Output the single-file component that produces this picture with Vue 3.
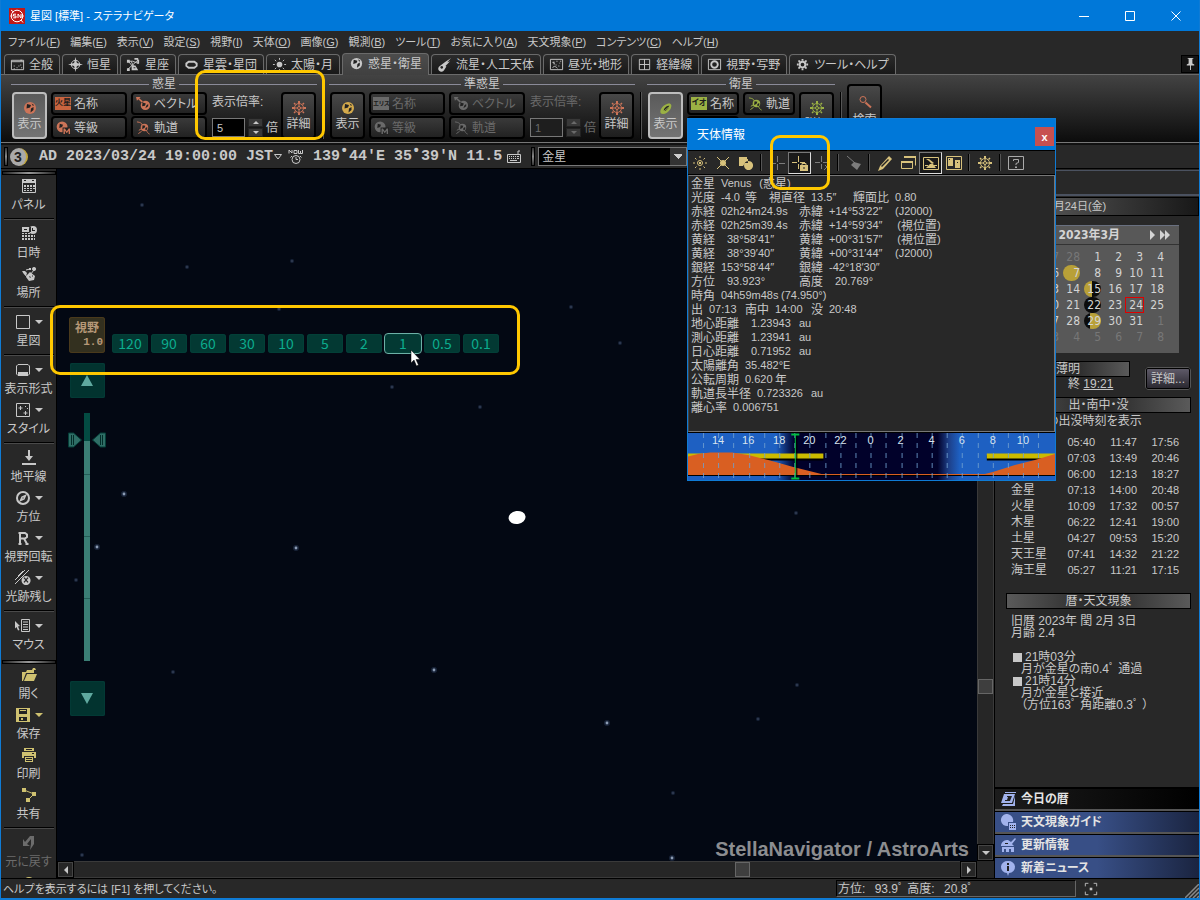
<script setup>
import { h, ref } from 'vue'

/* Each shape is "f:" (filled), "s:" (stroked) or "k:" (dark fill) followed by path data on a 16 x 16 grid. */
const shapes = {
  logo: ['f:M0 0H16V16H0z', 'w:M8 2.2a5.8 5.8 0 1 0 0 11.6a5.8 5.8 0 1 0 0-11.6M2 2l2.5 2M12 12l2 2.5M1.5 8h2M12.5 8h2', 'w:M7 6.2H4.5V8H7V9.8H4.2M9 10V6l3 4V6'],
  window: ['s:M1.5 3.5h13v10h-13zM1.5 5h13', 'f:M4 9h1v1H4zM7 11h1v1H7zM11 8h1v1h-1zM9 9h1v1H9zM4 12h1v1H4zM12 11h1v1h-1zM11 3h2v1h-2z'],
  target: ['s:M8 3.5a4.5 4.5 0 1 0 0 9a4.5 4.5 0 1 0 0-9', 'f:M8 0l1.5 6.500L16 8l-6.500 1.500L8 16l-1.500-6.500L0 8l6.500-1.500z'],
  constellation: ['s:M2.500 4.500l7 8.500M2.500 4.500H7L13.500 7M9.500 13l-4-8.500M2 13L13 3', 'f:M1 3h3v3H1zM9 1h4v2H9zM12 3h2v4h-2zM1 12h3v3H1zM6 9h4l3 5H6z', 'k:M8 11h2v1H8z'],
  nebula: ['t:M5 5h6l2.500 2v2.500L11 11.500H5L2.500 9.500V7z'],
  sun: ['f:M8 5a3 3 0 1 0 0 6a3 3 0 1 0 0-6', 's:M8 1v2M8 13v2M1 8h2M13 8h2M3 3l1.500 1.500M11.500 11.500L13 13M13 3l-1.500 1.500M4.500 11.500L3 13'],
  sunx: ['f:M8 5a3 3 0 1 0 0 6a3 3 0 1 0 0-6', 's:M2 2l4 4M14 2l-4 4M2 14l4-4M14 14l-4-4'],
  sunhollow: ['s:M8 5.500a2.500 2.500 0 1 0 0 5a2.500 2.500 0 1 0 0-5M8 1v2M8 13v2M1 8h2M13 8h2M3 3l1.500 1.500M11.500 11.500L13 13M13 3l-1.500 1.500M4.500 11.500L3 13', 'f:M7 7h2v2H7z'],
  planet: ['f:M8 2a6 6 0 1 0 0 12a6 6 0 1 0 0-12', 'k:M5 4l4 1-1 2.500-3.500 1zM9 8.500l2.500-1.500v3l-3 2.500zM9.500 3.500l2.500 1.500-1 1z'],
  planetarrow: ['f:M10 5a5 5 0 1 0 0 10a5 5 0 1 0 0-10M0 1h5L3.500 2.500 8 6 6.500 7.500 2.500 3.500 1 5z', 'k:M7 7l3.500 1-1 2.500-3 .5zM11 10l2-1.500v2.500l-3 2z'],
  planetm: ['f:M6.500 1.500a5.800 5.800 0 1 0 0 11.600a5.800 5.800 0 1 0 0-11.600', 'k:M4 4l3.500 1-1 2.500-3 1zM7 8h9v8H7z', 'f:M8 15V9h1.500l2 3 2-3H15v6h-1.500v-3.500l-2 2.500-2-2.500V15z'],
  orbit: ['f:M9 4a4 4 0 1 0 0 8a4 4 0 1 0 0-8', 'k:M7 5.500l3 .5-1 2.500-2.500 1zM10 8.500l2-1v2.500l-2 1z', 's:M1 2c4 .5 5 1.500 6 3.500M11 11c1 2 2 3.500 3.500 4M3 11l2.500-1.500M2.500 14.500L6 12'],
  moonring: ['f:M9 4c4-1.500 5.500 1 3.500 5-2.500 4-7 6-9.500 4.500C1 11 4 5.500 9 4', 'k:M6 11c-1-2 3-6 5.500-5l-1 2-3 3z', 's:M5 12l7-6'],
  gear: ['s:M8 3.500a4.500 4.500 0 1 0 0 9a4.500 4.500 0 1 0 0-9M8 6.500a1.500 1.500 0 1 0 0 3a1.500 1.500 0 1 0 0-3M8 4v2.500M8 9.500V12M4 8h2.500M9.500 8H12', 'f:M7 1h2v2.500H7zM7 12.500h2V15H7zM1 7h2.500v2H1zM12.500 7H15v2h-2.500zM2.500 3.500l1-1L5 4 4 5zM12.500 2.500l1 1L12 5l-1-1zM2.500 12.500L4 11l1 1-1.500 1.500zM11 12l1-1 1.500 1.500-1 1z'],
  cog: ['t:M8 5a3 3 0 1 0 0 6a3 3 0 1 0 0-6', 'f:M7 2h2v2H7zM7 12h2v2H7zM2 7h2v2H2zM12 7h2v2h-2zM3.500 3.500h2v2h-2zM10.500 3.500h2v2h-2zM3.500 10.500h2v2h-2zM10.500 10.500h2v2h-2z'],
  meteor: ['f:M15 1L9 5 3 9.500a3.300 3.300 0 1 0 4.500 4.500L10 10l-1-.5 5-5-3 1z', 'k:M5 9.500a1.500 1.500 0 1 0 .1 0z'],
  daylight: ['s:M1.500 2.500h13v11h-13zM4 11.500C5 9 7 10 9 12M4 5.500l2 2', 'f:M4 5h2v1H4zM8 4h1v1H8zM11 6h1v1h-1zM7 8h1v1H7zM12 4h1v1h-1zM10 9h1v1h-1zM5 7h1v1H5z'],
  grid: ['s:M2.500 2.500h11v11h-11zM8 2.500v11M2.500 8h11'],
  field: ['s:M1.500 2.500h13v11h-13z', 't:M8 4.500a3.500 3.500 0 1 0 0 7a3.500 3.500 0 1 0 0-7'],
  search: ['s:M6 2.500a3 3 0 1 0 0 6a3 3 0 1 0 0-6', 't:M8.500 8.500l5.500 5'],
  pin: ['f:M5 2h6v1h-1v5l2 1v1H4V9l2-1V3H5zM7.500 10h1v5h-1z'],
  clock: ['s:M8 6.500a4 4 0 1 0 0 8a4 4 0 1 0 0-8M8 8v2.500h2M4 7L2.500 8.500M12 7l1.500 1.500M1 4.500V1l3 3V1M6 1.500h3v3H6zM10.500 1v3.500h2V2M12.500 4.500h2V1'],
  keyboard: ['s:M1.500 5.500h13v8h-13zM12 5V2h2', 'f:M3 7h1v1H3zM5 7h1v1H5zM7 7h1v1H7zM9 7h1v1H9zM11 7h2v1h-2zM3 9h1v1H3zM5 9h1v1H5zM7 9h1v1H7zM9 9h1v1H9zM11 9h2v1h-2zM4 11h7v1H4z'],
  calendar: ['s:M1.500 2.500h13v12h-13z', 'f:M1 1h14v4H1zM3 7h2v2H3zM6 7h2v2H6zM9 7h2v2H9zM12 7h2v2h-2zM3 10h2v1H3zM6 10h2v1H6zM9 10h2v1H9zM12 10h2v1h-2zM3 12h2v1H3zM6 12h2v1H6zM9 12h2v1H9z', 'k:M3 2h2v1H3zM11 2h2v1h-2z'],
  datetime: ['f:M1 1h9v5H1zM1 7h2v1H1zM4 7h2v1H4zM7 7h2v1H7zM1 9h2v2H1zM4 9h2v2H4zM7 9h2v2H7zM10 9h2v2h-2zM13 9h1v2h-1zM1 12h2v2H1zM4 12h2v2H4zM7 12h2v2H7zM10 12h2v2h-2zM13 12h1v2h-1zM12 0a4 4 0 1 0 0 8a4 4 0 1 0 0-8', 'k:M11 2h1v2h2v1h-3zM3 3h3v1H3zM8 1h.7v5H8z'],
  place: ['f:M1 5h3l2 2-1 3-2-2zM6 9l3-3 5 4-1 4-5 1-3-4zM13 1a2 2 0 1 0 .1 0M8 2h2v2H8z', 's:M13 4l-4 5M2 6l5 6M5 4l4-1', 'k:M8 10l2 1-1 1zM11 9l1 1-1 1z'],
  square: ['s:M1.500 1.500h13v13h-13z'],
  display: ['s:M3 2.500h10l1.500 1.500v8L13 13.500H3L1.500 12V4z', 'f:M3 10h10v3H3z'],
  style: ['s:M1.500 1.500h13v13h-13zM5.500 4v4M3.500 6h4M10.500 9v4M8.500 11h4', 'f:M10 4h1v1h-1zM12 6h1v1h-1z'],
  horizon: ['f:M7 0h2v6h3l-4 5-4-5h3zM1 13h14v2H1z'],
  compass: ['t:M8 2a6 6 0 1 0 0 12a6 6 0 1 0 0-12', 'f:M12 4L9.500 9.500 4 12l2.500-5.500z', 'k:M7.500 7.500h1v1h-1z'],
  letterr: ['t:M5 14V3h5l2 1.500V7L10 8.500H5M9 8.500L12 14M3.500 3H6M3.500 14h3M10.500 14h3'],
  trail: ['s:M0 10L10 0M0 14L14 0M3 6l5-5', 'f:M11 6a4.500 4.500 0 1 0 .1 0', 'k:M8.500 8l1-.8L11 9l1.500-1.800 1 .8-1.800 2 1.800 2-1 .8L11 11l-1.500 1.800-1-.8 1.800-2z'],
  mouse: ['f:M0 3l5 5-2 .5 1.500 3.500-1.500.5L1.500 9 0 10.500z', 's:M6.500 1.500h8v12h-8zM8 4h5M8 6.500h5M8 9h5M8 11.500h5'],
  open: ['f:M1 5h4l1-2h5l1-2h2l1 2h-2v3H5L2 14H1zM6 7h10l-3 7H3z'],
  save: ['f:M1 1h14v14H1z', 'k:M4 2h8v5H4zM4 10h8v4H4z', 'f:M6 11h2v2H6zM5 3h6v1H5z'],
  print: ['f:M3 1h10v3H3zM1 5h14v6h-2V9H3v2H1zM4 10h8v5H4z', 'k:M5 2h6v1H5zM5 11h6v1H5zM5 13h6v1H5zM11 6h2v1h-2z'],
  share: ['s:M3 3l10 4-6 6', 'f:M1 1h4v4H1zM11 5h4v4h-4zM5 11h4v4H5z'],
  undo: ['f:M2 4l2 3 5-6h4v8l-4 6 1-6V4L6 9l3 2H2z'],
  shapes: ['f:M1 2h8v2h1v4H7L5 11H1zM10.500 6a4.500 4.500 0 1 0 .1 0'],
  cross: ['s:M8.500 1v6M8.500 9v6M1 8.500h6M10 8.500h6'],
  crosslock: ['s:M6.500 1v6M6.500 9v5M0 7.500h5M8 7.500h5', 'f:M8 10h8v6H8z', 's:M10 10V8.500h4V10', 'k:M11.500 12h1v2h-1z'],
  crossoff: ['s:M6.500 1v6M6.500 9v5M0 7.500h5M8 7.500h5M9 15l6-6M10 10l5 5'],
  broom: ['s:M1 1l8 7', 'f:M8 7l7 2-4 6-6-5z'],
  pencil: ['f:M12 1l3 3-9 10-5 2 2-5z', 'k:M11 4l1 1-7 7-1-1z'],
  windows: ['s:M4.500 2.500h11v8M1.500 7.500h11v6h-11z', 'f:M4 1h12v2H4zM1 6h12v2H1z'],
  altitude: ['s:M.5 2.500h15v12H.5z', 'f:M3 13l4-4h3l3 4zM2 10h3v1H2zM11 10h3v1h-3zM3 4h3l5 4-2 1-3-3z'],
  book: ['s:M.5 1.500h15v13H.5z', 'f:M2 3h5v8H2zM9 5h5v8H9z', 'k:M3 4h1v1H3zM11 7h1v1h-1z'],
  help: ['s:M.500 1.500h15v13H.5z', 's:M5.500 6V4.500h5v3L8 8.500V10', 'f:M7 11.500h2v1.500H7z'],
  today: ['f:M5 1h11v1H5zM4 3h11l-3 9H1zM3 13h10l2-8v10H2z', 'k:M7 5h5l-2 5H5V9h2l1-3H7z'],
  guide: ['f:M6 0a6 6 0 1 0 2 12V8h5A6.500 6.500 0 0 0 6 0zM9 9h7v7H9z', 'k:M10 11h1v1h-1zM12 11h1v1h-1zM14 11h1v1h-1zM10 13h1v1h-1zM12 13h1v1h-1zM14 13h1v1h-1z'],
  update: ['f:M1 8c1-4 4-5 7-5l3 2 4-4 1 1-4 5 2 2H1zM2 10h12v5h-3v-3H9v3H6v-3H4v3H2z', 'k:M5 6h3v1H5z'],
  news: ['f:M8 1a6.500 6 0 0 0-1 12l1 3 1-3A6.500 6 0 0 0 8 1', 'k:M7 3h2v2H7zM7 6h2v5H7z'],
  focus: ['s:M1.500 5V1.500H5M11 1.500h3.500V5M14.500 11v3.500H11M5 14.500H1.500V11', 'f:M6.500 6.500h3v3h-3z'],
}
const Icon = (props) =>
  h('svg', { viewBox: '0 0 16 16', class: 'icon', 'aria-hidden': 'true' },
    shapes[props.name].map((s) => {
      const d = s.slice(2)
      const kind = s[0]
      if (kind === 'f') return h('path', { d, fill: 'currentColor' })
      if (kind === 'k') return h('path', { d, fill: '#222' })
      return h('path', { d, fill: 'none', stroke: kind === 'w' ? '#fff' : 'currentColor', 'stroke-width': kind === 't' ? 2 : 1 })
    }))
Icon.props = ['name']

const menus = [
  ['ファイル', 'F'], ['編集', 'E'], ['表示', 'V'], ['設定', 'S'], ['視野', 'I'], ['天体', 'O'], ['画像', 'G'],
  ['観測', 'B'], ['ツール', 'T'], ['お気に入り', 'A'], ['天文現象', 'P'], ['コンテンツ', 'C'], ['ヘルプ', 'H'],
]
const tabs = [
  ['window', '全般'], ['target', '恒星'], ['constellation', '星座'], ['nebula', '星雲・星団'], ['sun', '太陽・月'],
  ['planet', '惑星・衛星'], ['meteor', '流星・人工天体'], ['daylight', '昼光・地形'], ['grid', '経緯線'],
  ['field', '視野・写野'], ['cog', 'ツール・ヘルプ'],
]
const groups = [
  { title: '惑星', key: 'p', badge: '火星', tone: 'red', on: true, off: false, scale: '5' },
  { title: '準惑星', key: 'd', badge: 'エリス', tone: 'gold', on: false, off: true, scale: '1' },
]
const side = [
  ['calendar', 'パネル'], null, ['datetime', '日時'], ['place', '場所'], null, ['square', '星図', 1], null,
  ['display', '表示形式', 1], ['style', 'スタイル', 1], null, ['horizon', '地平線'], ['compass', '方位', 1],
  ['letterr', '視野回転', 1], ['trail', '光跡残し', 1], null, ['mouse', 'マウス', 1],
]
const fileTools = [
  ['open', '開く'], ['save', '保存', 1], ['print', '印刷'], ['share', '共有'], null,
]
const fovs = ['120', '90', '60', '30', '10', '5', '2', '1', '0.5', '0.1']
const fov = ref('1')
const stars = [
  [235, 92, 1], [85, 36, 1], [130, 98, 1], [514, 138, 1], [563, 174, 1], [222, 140, 1], [335, 218, 1], [423, 238, 1],
  [67, 325, 2], [40, 378, 2], [19, 411, 1], [239, 379, 2], [116, 503, 1], [377, 501, 2], [550, 554, 2], [701, 550, 1],
  [740, 516, 1], [739, 344, 1], [616, 624, 1], [615, 689, 2], [25, 686, 1],
]

const info = [
  '金星 Venus (惑星)',
  '光度 -4.0等  視直径 13.5″  輝面比 0.80',
  '赤経 02h24m24.9s  赤緯 +14°53′22″ (J2000)',
  '赤経 02h25m39.4s  赤緯 +14°59′34″ (視位置)',
  '黄経  38°58′41″   黄緯 +00°31′57″ (視位置)',
  '黄経  38°39′40″   黄緯 +00°31′44″ (J2000)',
  '銀経 153°58′44″   銀緯 -42°18′30″',
  '方位  93.923°     高度  20.769°',
  '時角 04h59m48s (74.950°)',
  '出 07:13 南中 14:00 没 20:48',
  '地心距離  1.23943 au',
  '測心距離  1.23941 au',
  '日心距離  0.71952 au',
  '太陽離角 35.482°E',
  '公転周期 0.620年',
  '軌道長半径 0.723326 au',
  '離心率 0.006751',
]
/* The readout is set on a grid of 6px cells: one for a Latin character, two for a Japanese one. */
const cells = (line) =>
  (line.match(/ +|[\u3000-\u9fff]+|[^ \u3000-\u9fff]+/g) || []).map((t) => {
    const wide = /[\u3000-\u9fff]/.test(t)
    return { t, wide, open: t === '(', w: t.length * (wide ? 12 : 6) }
  })

const hours = [14, 16, 18, 20, 22, 0, 2, 4, 6, 8, 10].map((n, i) => ({ n, x: 30 + Math.round(i * 30.4) }))
const ticks = Array.from({ length: 23 }, (_, i) => Math.round(15 + i * 15.2))

const weeks = [
  [['26', 'dim'], ['27', 'dim'], ['28', 'dim'], ['1'], ['2'], ['3'], ['4']],
  [['5'], ['6'], ['7', 'full'], ['8'], ['9'], ['10'], ['11']],
  [['12'], ['13'], ['14'], ['15', 'last'], ['16'], ['17'], ['18']],
  [['19'], ['20'], ['21'], ['22', 'new'], ['23'], ['24', 'today'], ['25']],
  [['26'], ['27'], ['28'], ['29', 'first'], ['30'], ['31'], ['1', 'dim']],
  [['2', 'dim'], ['3', 'dim'], ['4', 'dim'], ['5', 'dim'], ['6', 'dim'], ['7', 'dim'], ['8', 'dim']],
]
const rises = [
  ['太陽', '05:40', '11:47', '17:56'], ['月', '07:03', '13:49', '20:46'], ['水星', '06:00', '12:13', '18:27'],
  ['金星', '07:13', '14:00', '20:48'], ['火星', '10:09', '17:32', '00:57'], ['木星', '06:22', '12:41', '19:00'],
  ['土星', '04:27', '09:53', '15:20'], ['天王星', '07:41', '14:32', '21:22'], ['海王星', '05:27', '11:21', '17:15'],
]
const panels = [['today', '今日の暦'], ['guide', '天文現象ガイド'], ['update', '更新情報'], ['news', '新着ニュース']]
</script>

<template>
  <div class="win">
    <header class="title">
      <Icon name="logo" class="logo" />
      <h1>星図 [標準] - ステラナビゲータ</h1>
      <div class="winbtns">
        <button aria-label="最小化"><svg viewBox="0 0 10 10"><path d="M0 5.500h10" /></svg></button>
        <button aria-label="最大化"><svg viewBox="0 0 10 10"><path d="M.5.500h9v9h-9z" /></svg></button>
        <button aria-label="閉じる"><svg viewBox="0 0 10 10"><path d="M.5.500l9 9M9.500.500l-9 9" /></svg></button>
      </div>
    </header>

    <nav class="menu">
      <button v-for="m in menus" :key="m[1]">{{ m[0] }}(<u>{{ m[1] }}</u>)</button>
    </nav>

    <div class="tabs">
      <button v-for="(t, i) in tabs" :key="t[1]" :class="{ on: i === 5 }"><Icon :name="t[0]" />{{ t[1] }}</button>
      <button class="pin" aria-label="固定"><Icon name="pin" /></button>
    </div>

    <section class="ribbon">
      <template v-for="g in groups" :key="g.key">
        <div class="group" :class="[g.tone, { off: g.off }]">
          <h2>{{ g.title }}</h2>
          <div class="tools">
            <button class="big" :class="{ pressed: g.on }"><Icon name="planet" />表示</button>
            <div class="pair">
              <button class="small"><span class="badge" :class="{ tiny: g.badge.length > 2 }">{{ g.badge }}</span>名称</button>
              <button class="small"><Icon name="planetm" />等級</button>
            </div>
            <div class="pair">
              <button class="small"><Icon name="planetarrow" />ベクトル</button>
              <button class="small"><Icon name="orbit" />軌道</button>
            </div>
            <div class="scale">
              <label :for="'scale-' + g.key">表示倍率:</label>
              <div class="spin">
                <input :id="'scale-' + g.key" type="text" :value="g.scale" />
                <span class="arrows"><button aria-label="上げる"><i class="up"></i></button><button aria-label="下げる"><i class="down"></i></button></span>
                <span>倍</span>
              </div>
            </div>
            <button class="big detail"><Icon name="gear" />詳細</button>
          </div>
        </div>
        <span class="rule"></span>
      </template>
      <div class="group green">
        <h2>衛星</h2>
        <div class="tools">
          <button class="big pressed"><Icon name="moonring" />表示</button>
          <div class="pair short">
            <button class="small"><span class="badge">イオ</span>名称</button>
            <button class="small" aria-label="等級"></button>
          </div>
          <div class="pair short">
            <button class="small"><Icon name="orbit" />軌道</button>
          </div>
          <button class="big last"><Icon name="gear" />詳細</button>
        </div>
      </div>
      <span class="rule"></span>
      <button class="big find red"><Icon name="search" />検索</button>
    </section>

    <section class="status">
      <span class="grip"></span>
      <span class="coin">3</span>
      <span>AD</span><span>2023/03/24</span><span>19:00:00</span>
      <span class="zone">JST<svg viewBox="0 0 8 6"><path d="M.5.500h7L4 5z" /></svg></span>
      <Icon name="clock" class="now" />
      <span>139<sup>•</sup>44'E</span><span>35<sup>•</sup>39'N</span><span class="alt">11.5<Icon name="keyboard" /></span>
      <span class="grip second"></span>
      <select aria-label="天体"><option>金星</option><option>火星</option></select>
    </section>

    <main>
      <aside class="side">
        <span class="hgrip"></span>
        <template v-for="(s, i) in side" :key="i">
          <hr v-if="!s" />
          <button v-else><span class="glyph"><Icon :name="s[0]" /><i v-if="s[2]" class="down"></i></span>{{ s[1] }}</button>
        </template>
        <span class="hgrip low"></span>
        <template v-for="(s, i) in fileTools" :key="i">
          <hr v-if="!s" />
          <button v-else><span class="glyph file"><Icon :name="s[0]" /><i v-if="s[2]" class="down"></i></span>{{ s[1] }}</button>
        </template>
        <button class="dim"><span class="glyph"><Icon name="undo" /></span>元に戻す</button>
        <button aria-label="設定"><span class="glyph file"><Icon name="planet" /></span></button>
      </aside>

      <div class="view">
        <div class="sky">
          <svg class="stars">
            <g v-for="(s, i) in stars" :key="i">
              <circle :cx="s[0]" :cy="s[1]" :r="s[2] + 1" fill="#4a648f" opacity=".3" />
              <circle :cx="s[0]" :cy="s[1]" :r="s[2] * 0.7" fill="#a9b9d2" :opacity="s[2] * 0.4" />
            </g>
            <ellipse cx="460" cy="348.500" rx="8.500" ry="6.500" fill="#fff" transform="rotate(-8 460 348)" />
          </svg>
          <div class="fov">
            <button class="fovnow">視野<b>1.0</b></button>
            <button v-for="f in fovs" :key="f" :class="{ on: fov === f }" @click="fov = f">{{ f }}</button>
          </div>
          <div class="zoom">
            <button aria-label="拡大"><i class="up"></i></button>
            <svg class="slider" viewBox="0 0 40 252">
              <rect x="17" y="2" width="6" height="248" fill="#034b42" />
              <rect x="17" y="30" width="6" height="220" fill="#3b7e75" />
              <path d="M17 63.500h6M17 125.500h6M17 187.500h6" stroke="#245d57" />
              <path d="M1.500 22v14h5l8-7-8-7zM38.500 22v14h-5l-8-7 8-7z" fill="#2f6e66" stroke="#043f38" />
              <path d="M4.500 24v10M6.500 24v10M33.500 24v10M35.500 24v10" stroke="#032c28" />
            </svg>
            <button aria-label="縮小"><i class="down"></i></button>
          </div>
          <svg class="cursor" viewBox="0 0 11 18"><path d="M1 1v13l3-3 2.500 6 2-1L6 10.500h4z" fill="#fff" stroke="#000" stroke-width=".5" /></svg>
          <p class="mark">StellaNavigator / AstroArts</p>
        </div>
        <div class="vbar"><span class="thumb"></span><button aria-label="下へ"><i class="down"></i></button></div>
        <div class="hbar"><button aria-label="左へ"><i class="left"></i></button><span class="thumb"></span><button aria-label="右へ"><i class="right"></i></button></div>
      </div>

      <aside class="panel">
        <div class="band"></div>
        <h2 class="date">2023年 3月24日(金)</h2>
        <div class="cal">
          <div class="calhead"><span>2023年3月</span><button aria-label="翌月"><i class="right"></i></button><button aria-label="翌年"><i class="right"></i><i class="right"></i></button></div>
          <table>
            <tbody>
              <tr v-for="(w, i) in weeks" :key="i"><td v-for="(d, j) in w" :key="j" :class="d[1]"><span>{{ d[0] }}</span></td></tr>
            </tbody>
          </table>
        </div>
        <div class="dusk">
          <div>
            <h3>薄明</h3>
            <p>終 <a href="#">19:21</a></p>
          </div>
          <button>詳細...</button>
        </div>
        <h3>出・南中・没</h3>
        <p class="note">金星の出没時刻を表示</p>
        <table class="rise">
          <tbody>
            <tr v-for="r in rises" :key="r[0]"><th>{{ r[0] }}</th><td>{{ r[1] }}</td><td>{{ r[2] }}</td><td>{{ r[3] }}</td></tr>
          </tbody>
        </table>
        <h3 class="almanac">暦・天文現象</h3>
        <div class="events">
          <p>旧暦 2023年 閏 2月 3日</p>
          <p>月齢 2.4</p>
          <p class="event"><span class="mark-sq"></span>21時03分</p>
          <p class="in">月が金星の南0.4ﾟ 通過</p>
          <p><span class="mark-sq"></span>21時14分</p>
          <p class="in">月が金星と接近</p>
          <p class="in">（方位163ﾟ 角距離0.3ﾟ ）</p>
        </div>
        <nav class="links">
          <button v-for="(p, i) in panels" :key="p[1]" :class="{ on: i === 0 }"><Icon :name="p[0]" />{{ p[1] }}</button>
        </nav>
      </aside>
    </main>

    <footer>
      <span class="hint">ヘルプを表示するには [F1] を押してください。</span>
      <span class="pos">方位:&ensp; 93.9ﾟ 高度:&ensp; 20.8ﾟ</span>
      <Icon name="focus" class="focus" />
      <svg class="size" viewBox="0 0 14 14"><path d="M0 14L14 0M4 14L14 4M8 14l6-6M12 14l2-2" stroke="#888" stroke-width="1.500" /></svg>
    </footer>

    <section class="popup">
      <header><h2>天体情報</h2><button aria-label="閉じる">x</button></header>
      <div class="bar">
        <button aria-label="明るく"><Icon name="sunhollow" /></button>
        <button aria-label="消去"><Icon name="sunx" /></button>
        <button aria-label="複写"><Icon name="shapes" /></button>
        <span class="rule"></span>
        <button class="off" aria-label="中心"><Icon name="cross" /></button>
        <button class="on" aria-label="中心を固定"><Icon name="crosslock" /></button>
        <button class="off" aria-label="固定解除"><Icon name="crossoff" /></button>
        <span class="rule"></span>
        <button class="off wide" aria-label="導入"><Icon name="broom" /></button>
        <span class="rule"></span>
        <button aria-label="編集"><Icon name="pencil" /></button>
        <button aria-label="ウィンドウ"><Icon name="windows" /></button>
        <button class="on" aria-label="高度グラフ"><Icon name="altitude" /></button>
        <button aria-label="図鑑"><Icon name="book" /></button>
        <span class="rule"></span>
        <button aria-label="設定"><Icon name="gear" /></button>
        <span class="rule"></span>
        <button class="grey" aria-label="ヘルプ"><Icon name="help" /></button>
      </div>
      <div class="readout">
        <p v-for="(l, i) in info" :key="i"><span v-for="(c, j) in cells(l)" :key="j" :class="{ latin: !c.wide, open: c.open }" :style="{ width: c.w + 'px' }">{{ c.t }}</span></p>
      </div>
      <svg class="graph" viewBox="0 0 366 47" preserveAspectRatio="none">
        <defs>
          <linearGradient id="night">
            <stop offset="0" stop-color="#1e60c2" /><stop offset=".24" stop-color="#1e60c2" /><stop offset=".29" stop-color="#01012a" />
            <stop offset=".68" stop-color="#01012a" /><stop offset=".71" stop-color="#1d3f88" /><stop offset=".74" stop-color="#1e60c2" /><stop offset="1" stop-color="#1e60c2" />
          </linearGradient>
        </defs>
        <rect width="366" height="47" fill="url(#night)" />
        <path d="M0 24h135M298 24h68" stroke="#000" stroke-width="5" transform="translate(0 1)" />
        <path d="M0 23h135M298 23h68" stroke="#cbbb00" stroke-width="5" />
        <path d="M0 42V23.500L10 21l12-1.500h22L60 22l20 5 25 7 28 7h163l8-2 22-7 20-5 20-6V42z" fill="#d95f22" />
        <path d="M0 42.500h366" stroke="#000" /><path d="M0 41.500h366" stroke="#d95f22" />
        <path v-for="t in ticks" :key="t" :d="`M${t}.5 0V47`" stroke="#6f9fd0" stroke-dasharray="5 5" opacity=".85" />
        <text v-for="o in hours" :key="o.n" :x="o.x" y="11">{{ o.n }}</text>
        <path d="M107 1v45" stroke="#00c040" /><path d="M108.500 1v45" stroke="#000" /><path d="M103 1.500h8M103 45.500h8" stroke="#00c040" stroke-width="2" />
      </svg>
      <div class="ring lock"></div>
    </section>
    <div class="ring scalering"></div>
    <div class="ring fovring"></div>
  </div>
</template>

<style>
html, body { margin: 0; background: #282828; }
</style>

<style scoped>
* { box-sizing: border-box; margin: 0; }
.win {
  position: relative; display: flex; flex-direction: column; height: 100vh; overflow: hidden;
  border: 1px solid #0f7bd5; border-top: 0; background: #282828; color: #c8c8c8;
  font-family: "Liberation Sans", "Noto Sans CJK JP", sans-serif; font-size: 12px; line-height: 16px;
  font-feature-settings: "palt";
}
button, input, select { font: inherit; font-feature-settings: inherit; color: inherit; background: none; border: 0; padding: 0; white-space: nowrap; }
h1, h2, h3 { font-size: 12px; font-weight: 400; }
.icon { width: 16px; height: 16px; flex: none; }
i { display: block; width: 0; height: 0; border: 4px solid transparent; }
i.up { border-top: 0; border-bottom-color: currentColor; }
i.down { border-bottom: 0; border-top-color: currentColor; }
i.left { border-left: 0; border-right-color: currentColor; }
i.right { border-right: 0; border-left-color: currentColor; }

.title { display: flex; align-items: center; flex: none; height: 31px; padding-left: 8px; background: #0078d9; color: #fff; }
.title h1 { font-size: 11px; }
.logo { color: #c01818; margin-right: 5px; }
.winbtns { display: flex; margin-left: auto; }
.winbtns button { display: flex; align-items: center; justify-content: center; width: 46px; height: 31px; }
.winbtns svg { width: 10px; height: 10px; overflow: visible; fill: none; stroke: #fff; }

.menu { display: flex; gap: 10px; align-items: center; flex: none; height: 22px; padding-left: 7px; font-size: 11px; }

.tabs { display: flex; align-items: flex-end; gap: 2px; flex: none; height: 21px; padding-left: 3px; }
.tabs button { display: flex; align-items: center; gap: 4px; height: 20px; padding: 0 6px 0 5px; border: 1px solid #6a6a6a; border-bottom: 0; border-radius: 4px 4px 0 0; background: linear-gradient(#2b2b2b, #181818); }
.tabs .icon { width: 15px; height: 15px; }
.tabs button.on { height: 22px; padding: 0 6px 2px; margin-bottom: -1px; background: linear-gradient(#4c4c4c, #404040); z-index: 1; }
.tabs .pin { margin-left: auto; width: 18px; height: 18px; padding: 0; justify-content: center; align-self: center; border: 1px solid #000; border-radius: 0; background: #141414; }

.ribbon { display: flex; flex: none; height: 69px; padding: 1px 0 0 10px; border-top: 1px solid #6a6a6a; border-bottom: 1px solid #777; background: linear-gradient(#434343, #0c0c0c); }
.group h2 { display: flex; align-items: center; gap: 3px; height: 16px; }
.group h2::before, .group h2::after { content: ""; flex: 1; height: 1px; background: #8a8a98; }
.tools { display: flex; gap: 4px; padding: 0 1px; }
.big { display: flex; flex-direction: column; align-items: center; justify-content: flex-end; width: 35px; height: 47px; padding-bottom: 5px; border: 2px solid #000; border-radius: 4px; background: linear-gradient(#484848, #1e1e1e); }
.big.pressed { border: 2px solid #bdbdbd; background: linear-gradient(#5a5a5a, #747474); }
.pair { display: flex; flex-direction: column; gap: 1px; width: 76px; }
.pair.short { width: 52px; }
.small { display: flex; align-items: center; gap: 3px; height: 23px; padding-left: 2px; border: 2px solid #000; border-radius: 4px; background: linear-gradient(#3a3a3a, #222); }
.small .icon { width: 15px; height: 15px; }
.small .icon:first-child { margin-left: 1px; }
.badge { width: 16px; height: 13px; font-size: 8px; line-height: 12px; font-weight: 700; color: #1c1c1c; text-align: center; white-space: nowrap; }
.badge.tiny { font-size: 6px; }
.red .icon { color: #cc7458; } .red .badge { background: #c8643f; }
.gold .icon { color: #d4aa4c; } .green .icon { color: #9bb144; } .green .badge { background: #9bb144; }
.off .pair, .off .scale { color: #6a6a6a; }
.off .pair .icon { color: #6a6a6a; } .off .badge { background: #6a6a6a; }
.off .detail .icon { color: #cc7458; }
.scale { width: 66px; }
.scale label { display: block; height: 26px; padding-top: 2px; margin-left: 1px; }
.spin { display: flex; align-items: center; gap: 3px; margin-left: 1px; }
.spin input { width: 33px; height: 19px; padding-left: 4px; border: 1px solid #777; background: #000; font-size: 11px; }
.off .spin input { background: #1e1e1e; }
.arrows { display: grid; gap: 1px; }
.arrows button { display: flex; align-items: center; justify-content: center; width: 15px; height: 9px; background: #383838; border: 1px solid #222; }
.arrows i { border-width: 3px; }
.rule { flex: none; width: 2px; border-left: 1px solid #000; border-right: 1px solid #555; }
.ribbon .rule { height: 47px; margin: 16px 5px 0 5px; }
.find { margin: 8px 0 0; height: 54px; padding-bottom: 8px; gap: 2px; }

.status { display: flex; align-items: center; gap: 9px; flex: none; height: 26px; padding-left: 3px; border-bottom: 1px solid #000; border-top: 2px solid #111; font: 700 15px "Liberation Mono", monospace; white-space: nowrap; }
.grip { width: 4px; height: 19px; border: 1px solid #000; background: linear-gradient(#333, #888, #333); }
.coin { width: 18px; height: 18px; margin: 0 2px 0 -7px; border-radius: 50%; background: #aaa; border-right: 2px solid #c2a63a; color: #222; font: 700 14px/18px "Liberation Sans", sans-serif; text-align: center; }
.zone { display: flex; align-items: center; gap: 1px; }
.zone svg { width: 8px; height: 6px; fill: none; stroke: currentColor; }
.now { margin-left: -3px; }
.status sup { display: inline-block; width: 9px; font-size: 14px; line-height: 6px; vertical-align: 5px; }
.alt { display: flex; align-items: center; gap: 4px; }
.second { margin: 0 -6px 0 0; }
select { width: 149px; height: 19px; padding: 0 18px 0 3px; appearance: none; border: 1px solid #777; border-radius: 0; background: conic-gradient(from 315deg at 50% 100%, #ccc 90deg, transparent 0) right 4px top 6px / 8px 5px no-repeat, linear-gradient(#333, #333) right / 16px 100% no-repeat, #000; font: 12px/16px "Liberation Sans", "Noto Sans CJK JP", sans-serif; }

main { display: flex; flex: 1; min-height: 0; }
.side { flex: none; display: flex; flex-direction: column; align-items: center; width: 56px; padding-top: 2px; overflow: hidden; border-right: 1px solid #000; }
.side button { flex: none; display: flex; flex-direction: column; align-items: center; width: 52px; height: 40px; font-family: "Noto Sans CJK JP", sans-serif; line-height: 15px; }
.glyph { display: flex; align-items: center; gap: 4px; height: 20px; }
.glyph.file { color: #cfc170; }
.side hr { flex: none; width: 50px; height: 2px; margin: 2px 0 4px; border: 0; border-top: 1px solid #000; border-bottom: 1px solid #4a4a4a; }
.side .dim { color: #6c6c6c; }
.hgrip { flex: none; width: 54px; height: 4px; margin-bottom: 1px; border: 1px solid #000; background: linear-gradient(90deg, #222, #999, #222); }
.low { margin: 4px 0 1px; }

.view { flex: 1; min-width: 0; display: grid; grid-template: 1fr 17px / 1fr 17px; background: #262626; }
.sky { position: relative; overflow: hidden; background: #030813; }
.stars { position: absolute; inset: 0; width: 100%; height: 100%; }
.fov { position: absolute; left: 12px; top: 148px; display: flex; align-items: flex-end; gap: 3px; font-family: "Noto Sans CJK JP", sans-serif; }
.fov button { width: 36px; height: 19px; border-radius: 3px; background: #033933; box-shadow: inset 0 0 2px #075046; color: #0cac8e; font-size: 14px; line-height: 16px; padding-bottom: 2px; }
.fov button.on { outline: 1px solid #6db0a6; }
.fov .fovnow { height: 36px; margin-right: 4px; background: #33301f; box-shadow: inset 0 0 0 1px #4a3a1c; color: #b69878; font-size: 12px; line-height: 16px; font-weight: 700; }
.fovnow b { display: block; padding-right: 2px; font: 700 11px/14px "Liberation Mono", monospace; text-align: right; }
.zoom { position: absolute; left: 10px; top: 194px; display: flex; flex-direction: column; align-items: center; width: 40px; }
.zoom button { display: flex; align-items: center; justify-content: center; width: 35px; height: 35px; border-radius: 2px; background: #02332f; box-shadow: inset 0 0 2px #0a4f48; color: #5fa99f; }
.zoom i { border-width: 6px; }
.zoom .up { border-bottom-width: 11px; } .zoom .down { border-top-width: 11px; }
.slider { width: 40px; height: 252px; margin: 13px 0 18px; }
.cursor { position: absolute; left: 353px; top: 180px; width: 11px; height: 18px; }
.mark { position: absolute; right: 8px; bottom: 0; color: #8c8d90; font-size: 20px; font-weight: 700; line-height: 24px; }
.vbar, .hbar { position: relative; display: flex; border: 1px solid #3a3a3a; background: #262626; }
.vbar { flex-direction: column; justify-content: flex-end; }
.hbar { justify-content: space-between; }
.vbar button, .hbar button { display: flex; align-items: center; justify-content: center; width: 15px; height: 15px; border: 1px solid #444; outline: 1px solid #000; }
.thumb { width: 15px; height: 15px; border: 1px solid #666; background: #3e3e3e; }
.vbar .thumb { margin-bottom: 151px; }
.hbar .thumb { margin-left: auto; margin-right: 211px; }

.panel { flex: none; display: flex; flex-direction: column; width: 205px; border-left: 1px solid #000; font-feature-settings: "palt"; }
.band { flex: none; height: 26px; margin-top: 1px; border-top: 1px solid #4b5260; border-bottom: 2px solid #4b5260; }
.date { height: 19px; margin-top: 1px; padding-left: 13px; border: 1px solid #000; background: linear-gradient(90deg, #666, #181818); font-size: 11px; line-height: 17px; }
.cal { margin: 9px 20px 0 12px; background: #585858; border-top: 1px solid #697080; color: #d4d4d4; font: 12px/16px "DejaVu Sans Condensed", "DejaVu Sans", "Noto Sans CJK JP", sans-serif; }
.calhead { display: flex; align-items: center; justify-content: flex-end; gap: 5px; height: 19px; padding-right: 9px; border-bottom: 1px solid #333; font-weight: 700; }
.calhead span { margin-right: 25px; }
.calhead button { display: flex; }
.calhead i { border-width: 5px; border-right: 0; }
.cal table { width: 147px; margin: 4px 15px 0 auto; padding-bottom: 8px; border-spacing: 0; table-layout: fixed; }
.cal td { height: 16px; padding: 0; text-align: right; }
.cal td span { display: inline-block; width: 17px; height: 16px; border-radius: 8px; vertical-align: top; }
.dim { color: #777; }
.full span { background: #b8a038; }
.new span { background: #0c0c0c; }
.last span { background: linear-gradient(90deg, #b8a038 50%, #0c0c0c 50%); }
.first span { background: linear-gradient(90deg, #0c0c0c 35%, #b8a038 35%); }
.cal .today span { width: 19px; margin-right: -1px; padding-right: 1px; border-radius: 0; box-shadow: inset 0 0 0 1px #e00000; }
.dusk { display: flex; justify-content: space-between; margin: 8px 8px 5px 11px; }
.dusk h3 { width: 124px; margin: 0; text-align: center; }
.dusk p { padding-left: 62px; line-height: 15px; }
.dusk a { color: inherit; }
.dusk button { width: 46px; height: 23px; margin-top: 6px; border: 2px solid #000; outline: 1px solid #555; outline-offset: -1px; border-radius: 3px; background: linear-gradient(#5e5a68, #2a2830); }
h3 { flex: none; height: 16px; margin: 0 8px 0 11px; border: 1px solid #000; background: linear-gradient(90deg, #5a5a5a, #2a2a2a 45%, #2a2a2a 55%, #5a5a5a); line-height: 14px; text-align: center; }
.note { margin-left: 28px; }
.rise { width: 168px; margin: 5px 0 0 16px; border-spacing: 0; table-layout: fixed; }
.rise th, .rise td { height: 16px; padding: 0; }
.rise th { font-weight: 400; text-align: left; }
.rise td { font-size: 11px; text-align: right; }
.almanac { margin-top: 15px; }
.events { margin: 6px 0 0 16px; line-height: 12px; white-space: nowrap; }
.events .event { margin-top: 12px; }
.mark-sq { display: inline-block; width: 9px; height: 9px; margin: 0 3px 0 2px; vertical-align: -1px; background: #c8c8c8; }
.in { padding-left: 10px; }
.links { display: flex; flex-direction: column; gap: 2px; margin-top: auto; border-top: 1px solid #000; background: #555; }
.links button { display: flex; align-items: center; gap: 5px; height: 21px; padding-left: 5px; border-top: 1px solid #000; background: linear-gradient(90deg, #384f86 50%, #1a2440); color: #e4e4e4; font-weight: 700; }
.links .on { background: linear-gradient(90deg, #1c1c1c, #000); }
.links .icon { color: #a2b3ec; }

footer { display: flex; align-items: center; flex: none; height: 21px; padding-left: 2px; border-top: 1px solid #000; border-bottom: 1px solid #0f7bd5; }
.hint { flex: 1; font-size: 11px; }
.pos { width: 240px; height: 17px; padding-left: 1px; border: 1px solid #666; border-top-color: #000; border-left-color: #000; }
.focus { width: 14px; height: 14px; margin: 0 87px 0 8px; }
.size { width: 14px; height: 14px; align-self: flex-end; }

.popup { position: absolute; left: 686px; top: 118px; width: 369px; border: 1px solid #0f7bd5; background: #282828; }
.popup header { display: flex; align-items: center; justify-content: space-between; height: 31px; padding: 0 1px 0 9px; background: #0078d9; color: #fff; }
.popup header button { width: 19px; height: 19px; margin-top: 4px; background: #c75050; font-weight: 700; font-size: 11px; }
.bar { display: flex; align-items: center; height: 25px; border-top: 1px solid #000; border-bottom: 1px solid #000; color: #d8c27c; }
.bar button { display: flex; align-items: center; justify-content: center; width: 23px; height: 22px; }
.bar .off { color: #7c7c7c; }
.bar .grey { color: #aaa; }
.bar .on { border: 1px solid #ddd; border-top-color: #777; border-left-color: #777; background: #1a1a1a; }
.bar .rule { height: 17px; margin: 0 3px; }
.readout { height: 257px; padding: 0 2px; border: 1px solid #777; border-left-color: #444; }
.readout p { height: 14px; line-height: 14px; white-space: pre; font-family: "Noto Sans CJK JP", sans-serif; font-feature-settings: normal; }
.readout span { display: inline-block; height: 14px; vertical-align: top; }
.readout .latin { font: 11px/15px "Liberation Sans", sans-serif; }
.readout .open { text-align: right; }
.graph { display: block; width: 100%; height: 48px; border-top: 1px solid #000; }
.graph text { fill: #d8e4f0; font-size: 11px; text-anchor: middle; }
.ring { position: absolute; border: 3px solid #ffc800; border-radius: 10px; pointer-events: none; }
.lock { left: 82px; top: 16px; width: 60px; height: 55px; }
.scalering { left: 194px; top: 70px; width: 130px; height: 70px; }
.fovring { left: 49px; top: 305px; width: 470px; height: 70px; }
</style>
